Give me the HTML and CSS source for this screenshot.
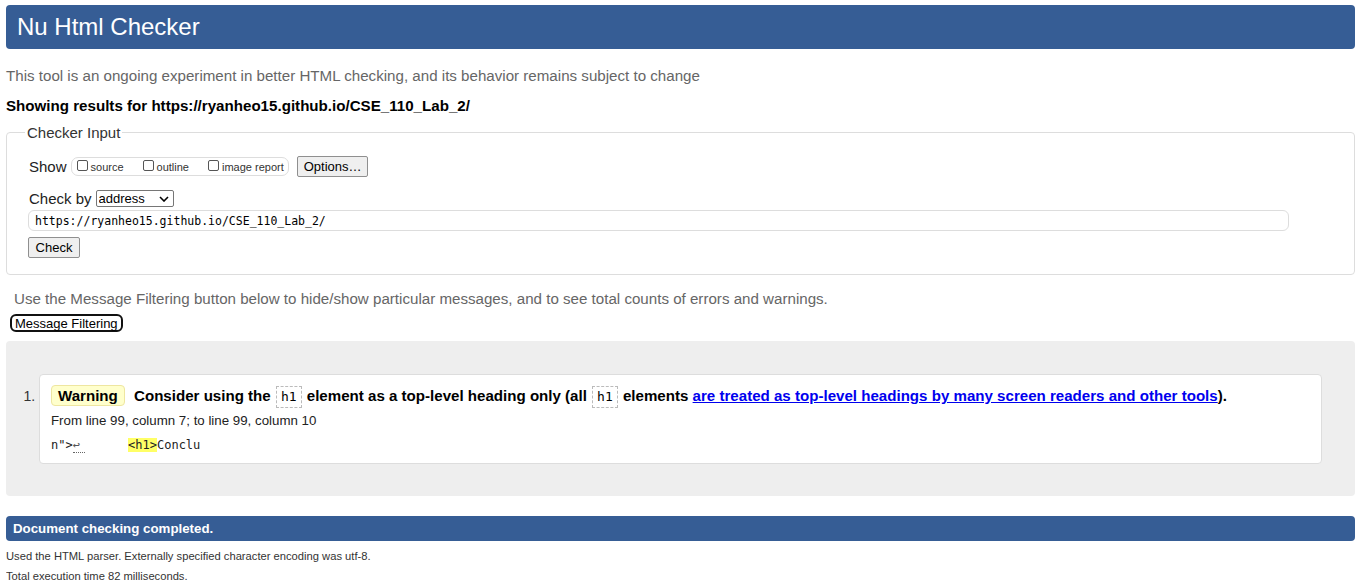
FILE: index.html
```html
<!DOCTYPE html>
<html lang="en">
<head>
<meta charset="utf-8">
<title>Showing results for https://ryanheo15.github.io/CSE_110_Lab_2/ - Nu Html Checker</title>
<link rel="stylesheet" href="styles.css">
</head>
<body>
<h1 class="title">Nu Html Checker</h1>
<p class="intro">This tool is an ongoing experiment in better HTML checking, and its behavior remains subject to change</p>
<p class="showing">Showing results for https://ryanheo15.github.io/CSE_110_Lab_2/</p>

<form class="checker">
  <fieldset class="input-set">
    <legend class="legend">Checker Input</legend>
    <div class="row show-row">
      <span class="row-label">Show</span>
      <span class="show-group">
        <label class="opt"><input type="checkbox" class="cb"><span>source</span></label>
        <label class="opt"><input type="checkbox" class="cb"><span>outline</span></label>
        <label class="opt"><input type="checkbox" class="cb"><span>image report</span></label>
      </span>
      <button type="button" class="btn options-btn">Options…</button>
    </div>
    <div class="row checkby-row">
      <span class="row-label">Check by</span>
      <span class="select-wrap">
        <select class="select"><option>address</option></select>
        <svg class="chev" width="10" height="6" viewBox="0 0 10 6"><path d="M1 1 L5 5 L9 1" fill="none" stroke="#000" stroke-width="1.6"/></svg>
      </span>
    </div>
    <input class="url" type="text" value="https://ryanheo15.github.io/CSE_110_Lab_2/">
    <div class="check-row"><button type="button" class="btn check-btn">Check</button></div>
  </fieldset>
</form>

<p class="filter-note">Use the Message Filtering button below to hide/show particular messages, and to see total counts of errors and warnings.</p>
<button type="button" class="filter-btn">Message Filtering</button>

<div class="results">
  <ol class="messages">
    <li class="msg">
      <p class="msg-head"><span class="badge">Warning</span> <span class="msg-text">Consider using the <code class="el">h1</code> element as a top-level heading only (all <code class="el">h1</code> elements <a class="link" href="#">are treated as top-level headings by many screen readers and other tools</a>).</span></p>
      <p class="location">From line 99, column 7; to line 99, column 10</p>
      <p class="extract"><code>n"&gt;<span class="lf">↩</span>      <b class="hl">&lt;h1&gt;</b>Conclu</code></p>
    </li>
  </ol>
</div>

<p class="done">Document checking completed.</p>
<p class="detail">Used the HTML parser. Externally specified character encoding was utf-8.</p>
<p class="detail">Total execution time 82 milliseconds.</p>
</body>
</html>
```

FILE: styles.css
```css
html, body {
  background: #fff;
}
body {
  margin: 5px 1px 0 6px;
  font-family: "Liberation Sans", Arial, sans-serif;
  color: #000;
}
.title {
  margin: 0;
  height: 44px;
  line-height: 44px;
  padding-left: 11px;
  background: #365d95;
  color: #fff;
  font-size: 24px;
  font-weight: normal;
  border-radius: 4px;
}
.intro {
  margin: 18px 0 0;
  font-size: 15.13px;
  line-height: 17px;
  color: #666;
}
.showing {
  margin: 13px 0 0;
  font-size: 15.13px;
  line-height: 17px;
  font-weight: bold;
}
.checker {
  margin: 10px 0 0;
}
.input-set {
  margin: 0;
  border: 1px solid #ddd;
  border-radius: 4px;
  padding: 15px 20px 16px 21px;
  min-width: 0;
}
.legend {
  margin-left: -3px;
  padding: 0 2px;
  font-size: 15px;
  color: #333;
}
.row {
  display: flex;
  align-items: center;
}
.row-label {
  font-size: 15px;
  color: #222;
  margin-left: 1px;
}
.show-row {
  height: 21px;
}
.show-group {
  display: flex;
  align-items: center;
  margin-left: 4px;
  height: 17px;
  padding: 0 4px 0 5px;
  border: 1px solid #ddd;
  border-radius: 7px;
}
.opt {
  display: flex;
  align-items: center;
  font-size: 11px;
  color: #333;
  margin-right: 19px;
}
.opt:last-child {
  margin-right: 0;
}
.cb {
  appearance: none;
  -webkit-appearance: none;
  width: 11px;
  height: 11px;
  margin: -3px 3px 0 0;
  border: 1px solid #555;
  border-radius: 2px;
  background: #fff;
}
.btn {
  font-family: "Liberation Sans", Arial, sans-serif;
  font-size: 13px;
  color: #000;
  background: #efefef;
  border: 1px solid #8f8f8f;
  border-radius: 2px;
  padding: 0 6px;
  margin: 0;
}
.options-btn {
  margin-left: 8px;
  height: 21px;
  width: 71px;
}
.checkby-row {
  margin-top: 11px;
  height: 20px;
}
.select-wrap {
  position: relative;
  margin-left: 4px;
  margin-top: 1px;
}
.select {
  appearance: none;
  -webkit-appearance: none;
  display: block;
  width: 78px;
  height: 17px;
  border: 1px solid #767676;
  border-radius: 2px;
  padding: 0 0 0 2px;
  font-family: "Liberation Sans", Arial, sans-serif;
  font-size: 13px;
  color: #000;
  background: #fff;
}
.chev {
  position: absolute;
  right: 5px;
  top: 6px;
  pointer-events: none;
}
.url {
  display: block;
  box-sizing: border-box;
  width: 1261px;
  height: 21px;
  margin: 2px 0 0;
  padding: 0 0 0 6px;
  border: 1px solid #ddd;
  border-radius: 6px;
  font-family: "DejaVu Sans Mono", "Liberation Mono", monospace;
  font-size: 11.5px;
  color: #000;
  background: #fff;
}
.check-row {
  margin-top: 6px;
}
.check-btn {
  height: 21px;
  width: 52px;
}
.filter-note {
  margin: 15px 0 0;
  padding-left: 8px;
  font-size: 15.13px;
  line-height: 17px;
  color: #666;
}
.filter-btn {
  display: block;
  margin: 7px 0 0 4px;
  height: 18px;
  padding: 0 3px;
  font-family: "Liberation Sans", Arial, sans-serif;
  font-size: 13px;
  color: #000;
  background: #fff;
  border: 2px solid #111;
  border-radius: 6px;
  line-height: 13px;
}
.results {
  margin-top: 9px;
  background: #eee;
  border-radius: 4px;
  padding: 33px 33px 32px 33px;
}
.messages {
  margin: 0;
  padding: 0;
  list-style: decimal;
  font-size: 14px;
}
.msg {
  margin-left: 0;
  background: #fff;
  border: 1px solid #ddd;
  border-radius: 4px;
  padding: 10px 11px 9px 11px;
}
.msg::marker {
  color: #333;
  font-size: 14px;
}
.msg-head {
  margin: 0;
  font-size: 15.1px;
  line-height: 22px;
  font-weight: bold;
}
.badge {
  display: inline-block;
  background: #ffc;
  border: 1px solid #eee6a0;
  border-radius: 4px;
  padding: 0 6px;
  line-height: 19px;
  margin-right: 5px;
}
.el {
  display: inline-block;
  font-family: "DejaVu Sans Mono", "Liberation Mono", monospace;
  font-size: 13px;
  font-weight: normal;
  line-height: 20px;
  padding: 0 4px;
  border: 1px dashed #bbb;
  margin: 0 1px;
}
.link {
  color: #0000ee;
  text-decoration: underline;
}
.location {
  margin: 4px 0 0;
  font-size: 13.3px;
  line-height: 17px;
  color: #222;
}
.extract {
  margin: 8px 0 0;
  white-space: pre;
  font-size: 12px;
  line-height: 17px;
}
.extract code {
  font-family: "DejaVu Sans Mono", "Liberation Mono", monospace;
  font-size: 12px;
  color: #222;
}
.lf {
  display: inline-block;
  width: 12px;
  color: #555;
  border-bottom: 1px dotted #666;
  line-height: 13px;
}
.hl {
  background: #ff6;
  font-weight: normal;
  color: #222;
}
.done {
  margin: 20px 0 0;
  height: 25px;
  line-height: 25px;
  padding-left: 7px;
  background: #365d95;
  color: #fff;
  font-size: 13.3px;
  font-weight: bold;
  border-radius: 4px;
}
.detail {
  margin: 9px 0 0;
  font-size: 11.2px;
  line-height: 13px;
  color: #333;
}
.detail + .detail {
  margin-top: 7px;
}
```
